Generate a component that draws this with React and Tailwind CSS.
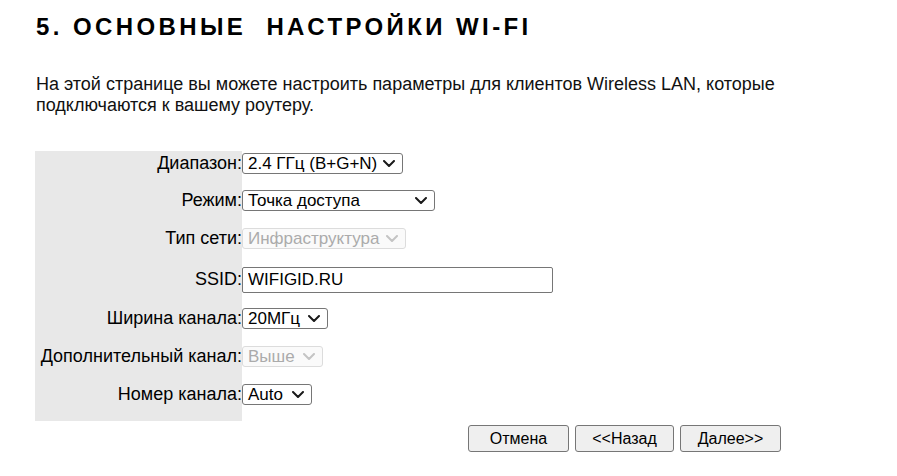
const rows = [
  { label: 'Диапазон:', value: '2.4 ГГц (B+G+N)', width: 'w-[161px]', height: 'h-[37px]' },
  { label: 'Режим:', value: 'Точка доступа', width: 'w-[193px]', height: 'h-[38px]' },
  { label: 'Тип сети:', value: 'Инфраструктура', width: 'w-[164px]', height: 'h-[38px]', disabled: true },
  { label: 'SSID:', value: 'WIFIGID.RU', height: 'h-[42px]', input: true },
  { label: 'Ширина канала:', value: '20МГц', width: 'w-[86px]', height: 'h-[38px]' },
  { label: 'Дополнительный канал:', value: 'Выше', width: 'w-[81px]', height: 'h-[38px]', disabled: true },
  { label: 'Номер канала:', value: 'Auto', width: 'w-[70px]', height: 'h-[39px]' },
];

function Chevron({ disabled }) {
  return (
    <svg width="12" height="7" viewBox="0 0 12 7" fill="none" className="shrink-0">
      <path
        d="M1 1L6 6L11 1"
        stroke={disabled ? '#c4c4c4' : '#1a1a1a'}
        strokeWidth="2"
        strokeLinecap="round"
        strokeLinejoin="round"
      />
    </svg>
  );
}

function FakeSelect({ value, width, disabled }) {
  return (
    <div
      className={`${width} h-[21px] flex items-center justify-between pl-[5px] pr-[7px] rounded-[3px] border text-[17px] ${
        disabled
          ? 'border-[#dcdcdc] bg-[#fafafa] text-[#ababab]'
          : 'border-[#767676] bg-white text-black'
      }`}
    >
      <span className="leading-[19px] whitespace-nowrap">{value}</span>
      <Chevron disabled={disabled} />
    </div>
  );
}

export default function App() {
  return (
    <div className="min-h-[476px] bg-white pl-[35px] pt-[13px] text-black text-[18px] font-['Liberation_Sans',Arial,sans-serif]">
      <h1 className="text-[24px] leading-[28px] font-bold tracking-[3.4px] pl-px">
        5. ОСНОВНЫЕ&nbsp; НАСТРОЙКИ WI-FI
      </h1>

      <p className="mt-[33px] pl-px leading-[21px] w-[800px] text-[#111]">
        На этой странице вы можете настроить параметры для клиентов Wireless LAN, которые
        <br />
        подключаются к вашему роутеру.
      </p>

      <div className="mt-[35px] grid grid-cols-[207px_auto]">
        {rows.map((row) => (
          <div key={row.label} className="contents">
            <div className={`${row.height} bg-[#e8e8e8] flex justify-end pt-[2px]`}>
              <span className={`${row.input ? 'leading-[26px]' : 'leading-[21px]'} whitespace-nowrap`}>
                {row.label}
              </span>
            </div>
            <div className={`${row.height} pt-[2px]`}>
              {row.input ? (
                <input
                  readOnly
                  defaultValue={row.value}
                  className="w-[311px] h-[26px] border border-[#767676] rounded-[2px] pl-[5px] text-[17px] outline-none"
                />
              ) : (
                <FakeSelect value={row.value} width={row.width} disabled={row.disabled} />
              )}
            </div>
          </div>
        ))}
      </div>

      <div className="mt-[4px] ml-[433px] flex gap-[6px] text-[16px]">
        {['Отмена', '<<Назад', 'Далее>>'].map((label, i) => (
          <button
            key={label}
            className={`${i === 1 ? 'w-[99px]' : 'w-[101px]'} h-[27px] bg-[#efefef] border border-[#767676] rounded-[3px] text-black`}
          >
            {label}
          </button>
        ))}
      </div>
    </div>
  );
}
